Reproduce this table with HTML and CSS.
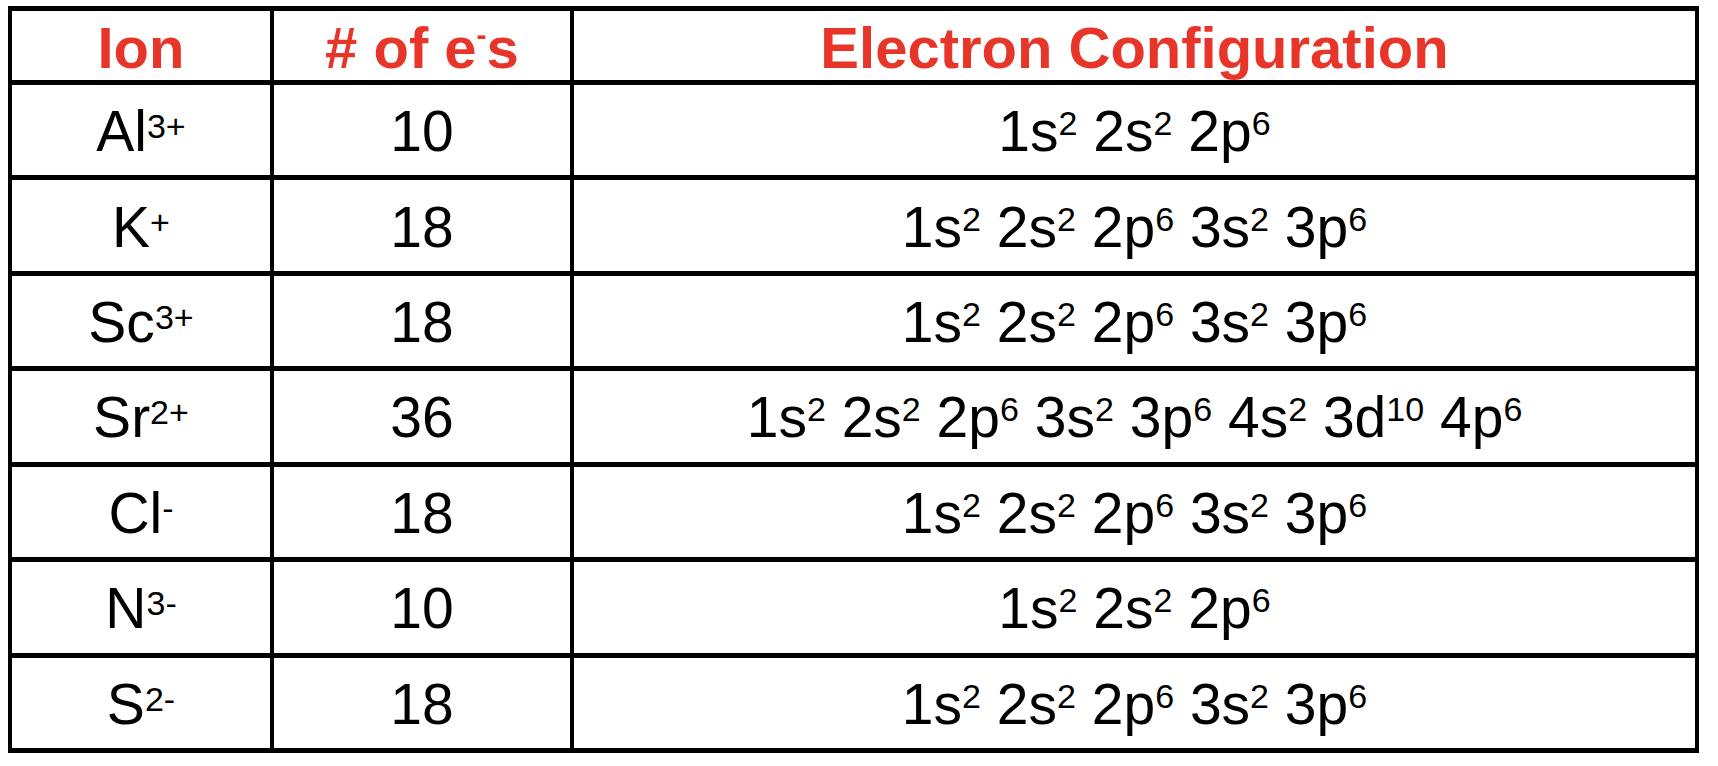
FILE: index.html
```html
<!DOCTYPE html>
<html lang="en">
<head>
<meta charset="utf-8">
<title>Ion Electron Configurations</title>
<link rel="stylesheet" href="styles.css">
</head>
<body>
<div class="table">
  <div class="cell head"><span class="txt">Ion</span></div>
  <div class="cell head"><span class="txt"># of e<sup class="hsup">-</sup>s</span></div>
  <div class="cell head"><span class="txt">Electron Configuration</span></div>

  <div class="cell"><span class="txt">Al<sup class="isup">3+</sup></span></div>
  <div class="cell"><span class="txt">10</span></div>
  <div class="cell"><span class="txt">1s<sup class="csup">2</sup> 2s<sup class="csup">2</sup> 2p<sup class="csup">6</sup></span></div>

  <div class="cell"><span class="txt">K<sup class="isup">+</sup></span></div>
  <div class="cell"><span class="txt">18</span></div>
  <div class="cell"><span class="txt">1s<sup class="csup">2</sup> 2s<sup class="csup">2</sup> 2p<sup class="csup">6</sup> 3s<sup class="csup">2</sup> 3p<sup class="csup">6</sup></span></div>

  <div class="cell"><span class="txt">Sc<sup class="isup">3+</sup></span></div>
  <div class="cell"><span class="txt">18</span></div>
  <div class="cell"><span class="txt">1s<sup class="csup">2</sup> 2s<sup class="csup">2</sup> 2p<sup class="csup">6</sup> 3s<sup class="csup">2</sup> 3p<sup class="csup">6</sup></span></div>

  <div class="cell"><span class="txt">Sr<sup class="isup">2+</sup></span></div>
  <div class="cell"><span class="txt">36</span></div>
  <div class="cell"><span class="txt">1s<sup class="csup">2</sup> 2s<sup class="csup">2</sup> 2p<sup class="csup">6</sup> 3s<sup class="csup">2</sup> 3p<sup class="csup">6</sup> 4s<sup class="csup">2</sup> 3d<sup class="csup">10</sup> 4p<sup class="csup">6</sup></span></div>

  <div class="cell"><span class="txt">Cl<sup class="isup">-</sup></span></div>
  <div class="cell"><span class="txt">18</span></div>
  <div class="cell"><span class="txt">1s<sup class="csup">2</sup> 2s<sup class="csup">2</sup> 2p<sup class="csup">6</sup> 3s<sup class="csup">2</sup> 3p<sup class="csup">6</sup></span></div>

  <div class="cell"><span class="txt">N<sup class="isup">3-</sup></span></div>
  <div class="cell"><span class="txt">10</span></div>
  <div class="cell"><span class="txt">1s<sup class="csup">2</sup> 2s<sup class="csup">2</sup> 2p<sup class="csup">6</sup></span></div>

  <div class="cell"><span class="txt">S<sup class="isup">2-</sup></span></div>
  <div class="cell"><span class="txt">18</span></div>
  <div class="cell"><span class="txt">1s<sup class="csup">2</sup> 2s<sup class="csup">2</sup> 2p<sup class="csup">6</sup> 3s<sup class="csup">2</sup> 3p<sup class="csup">6</sup></span></div>
</div>
</body>
</html>
```
FILE: styles.css
```css
html, body {
  margin: 0;
  padding: 0;
  background: #ffffff;
}

body {
  padding: 6px 0 0 8px;
  font-family: "Liberation Sans", Arial, Helvetica, sans-serif;
  color: #000000;
}

.table {
  box-sizing: border-box;
  width: 1691px;
  height: 747px;
  display: grid;
  grid-template-columns: 258px 296px 1121px;
  grid-template-rows: 69px repeat(7, 1fr);
  column-gap: 4px;
  row-gap: 5px;
  padding: 5px 4px;
  background: #000000;
}

.cell {
  background: #ffffff;
  display: flex;
  align-items: center;
  justify-content: center;
  font-size: 57px;
  line-height: 1;
  padding-top: 3px;
  box-sizing: border-box;
}

.txt {
  display: block;
  white-space: nowrap;
}

.head {
  color: #e8352a;
  font-weight: bold;
  font-size: 58px;
  padding-top: 4px;
}

sup {
  line-height: 0;
}

.isup {
  font-size: 34px;
  vertical-align: 13px;
}

.csup {
  font-size: 34px;
  vertical-align: 16px;
}

.hsup {
  font-size: 30px;
  vertical-align: 23px;
}
```
